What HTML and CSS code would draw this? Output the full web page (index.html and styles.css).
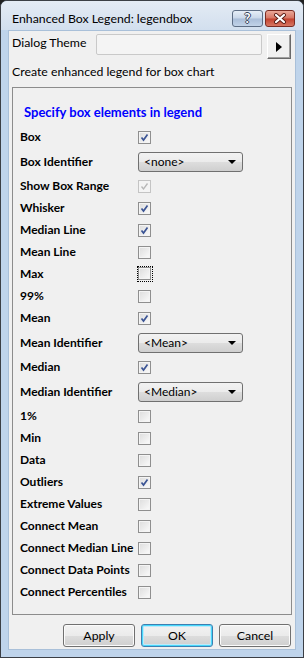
FILE: index.html
```html
<!DOCTYPE html>
<html lang="en">
<head>
  <meta charset="UTF-8" />
  <title>Enhanced Box Legend: legendbox</title>
  <link rel="stylesheet" href="styles.css">
</head>
<body>

<div class="window">
  <!-- TITLE BAR -->
  <div class="titlebar">
    <span class="title">Enhanced Box Legend: legendbox</span>
    <div class="caption-btns">
      <span class="cap help">?</span>
      <span class="cap close">
        <svg width="14" height="11" viewBox="0 0 14 11">
          <path d="M3 2 L11 9 M11 2 L3 9" stroke="#5a1e16" stroke-width="4" stroke-linecap="round"/>
          <path d="M3 2 L11 9 M11 2 L3 9" stroke="#fff" stroke-width="2.2" stroke-linecap="round"/>
        </svg>
      </span>
    </div>
  </div>

  <div class="frame">
    <div class="client">

      <div class="theme-row">
        <span class="theme-label">Dialog Theme</span>
        <span class="theme-field"></span>
        <span class="arrow-btn">
          <svg width="6" height="10" viewBox="0 0 6 10"><path d="M0 0 L6 5 L0 10 Z" fill="#000"/></svg>
        </span>
      </div>

      <div class="desc">Create enhanced legend for box chart</div>

      <!-- LEGEND ELEMENTS -->
      <div class="group">
        <div class="group-title">Specify box elements in legend</div>
        <div class="rows">
          <div class="row"><span class="lbl">Box</span><span class="chk on"><svg viewBox="0 0 11 11"><path d="M2.5 5.5 L4.5 8 L8.5 2.5" /></svg></span></div>
          <div class="row combo-row"><span class="lbl">Box Identifier</span><span class="combo"><span>&lt;none&gt;</span><i class="drop"></i></span></div>
          <div class="row"><span class="lbl">Show Box Range</span><span class="chk on disabled"><svg viewBox="0 0 11 11"><path d="M2.5 5.5 L4.5 8 L8.5 2.5" /></svg></span></div>
          <div class="row"><span class="lbl">Whisker</span><span class="chk on"><svg viewBox="0 0 11 11"><path d="M2.5 5.5 L4.5 8 L8.5 2.5" /></svg></span></div>
          <div class="row"><span class="lbl">Median Line</span><span class="chk on"><svg viewBox="0 0 11 11"><path d="M2.5 5.5 L4.5 8 L8.5 2.5" /></svg></span></div>
          <div class="row"><span class="lbl">Mean Line</span><span class="chk"></span></div>
          <div class="row"><span class="lbl">Max</span><span class="focus"><span class="chk"></span></span></div>
          <div class="row"><span class="lbl">99%</span><span class="chk"></span></div>
          <div class="row"><span class="lbl">Mean</span><span class="chk on"><svg viewBox="0 0 11 11"><path d="M2.5 5.5 L4.5 8 L8.5 2.5" /></svg></span></div>
          <div class="row combo-row"><span class="lbl">Mean Identifier</span><span class="combo"><span>&lt;Mean&gt;</span><i class="drop"></i></span></div>
          <div class="row"><span class="lbl">Median</span><span class="chk on"><svg viewBox="0 0 11 11"><path d="M2.5 5.5 L4.5 8 L8.5 2.5" /></svg></span></div>
          <div class="row combo-row"><span class="lbl">Median Identifier</span><span class="combo"><span>&lt;Median&gt;</span><i class="drop"></i></span></div>
          <div class="row"><span class="lbl">1%</span><span class="chk"></span></div>
          <div class="row"><span class="lbl">Min</span><span class="chk"></span></div>
          <div class="row"><span class="lbl">Data</span><span class="chk"></span></div>
          <div class="row"><span class="lbl">Outliers</span><span class="chk on"><svg viewBox="0 0 11 11"><path d="M2.5 5.5 L4.5 8 L8.5 2.5" /></svg></span></div>
          <div class="row"><span class="lbl">Extreme Values</span><span class="chk"></span></div>
          <div class="row"><span class="lbl">Connect Mean</span><span class="chk"></span></div>
          <div class="row"><span class="lbl">Connect Median Line</span><span class="chk"></span></div>
          <div class="row"><span class="lbl">Connect Data Points</span><span class="chk"></span></div>
          <div class="row"><span class="lbl">Connect Percentiles</span><span class="chk"></span></div>
        </div>
      </div>

      <div class="buttons">
        <span class="btn">Apply</span>
        <span class="btn default">OK</span>
        <span class="btn">Cancel</span>
      </div>

    </div>
  </div>
</div>

</body>
</html>
```

FILE: styles.css
```css
* { box-sizing: border-box; }
html, body {
  margin: 0; padding: 0;
  background: #202020;
}
body {
  font-family: Lato, 'Open Sans', sans-serif;
  font-size: 12px;
  color: #000;
}

.window {
  width: 304px; height: 658px;
  border: 1px solid #3b3f45;
  border-radius: 7px 7px 0 0;
  background: #bfd4eb;
  display: flex; flex-direction: column;
  overflow: hidden;
}

/* title bar */
.titlebar {
  height: 29px; flex: none;
  display: flex; align-items: flex-start;
  padding: 0 8px 0 11px;
  background: linear-gradient(#e4ebf4, #d2dfee);
}
.title { line-height: 16px; margin-top: 10px; font-size: 12.3px; }
.caption-btns { margin-left: auto; margin-top: 9px; display: flex; gap: 2px; }
.cap {
  height: 17px;
  border: 1px solid #5d6d84; border-radius: 3px;
  display: flex; align-items: center; justify-content: center;
}
.help {
  width: 31px;
  background: linear-gradient(#e6eef7, #c9d7e9 48%, #a9bdd8 52%, #c2d3e8);
  color: #fff; font-weight: bold; font-size: 13px; line-height: 13px;
  text-shadow: 1px 0 #36435a, -1px 0 #36435a, 0 1px #36435a, 0 -1px #36435a;
}
.close {
  width: 30px;
  border-color: #7b2c22;
  background: linear-gradient(#eaa898, #d67563 48%, #c2412d 52%, #d77762);
}

/* client area */
.frame { flex: 1; display: flex; padding: 0 7px 7px; }
.client {
  flex: 1;
  background: #f0f0f0;
  border: 1px solid #a9c0d9;
  padding: 3px 3px 0;
  display: flex; flex-direction: column;
}

.theme-row { display: flex; height: 25px; }
.theme-label { width: 84px; line-height: 16px; margin-top: 1px; font-size: 12.3px; }
.theme-field {
  width: 166px; height: 21px;
  border: 1px solid #c9c9c9; border-radius: 2px;
  background: #f4f4f4;
}
.arrow-btn {
  width: 24px; height: 25px; margin-left: 5px;
  background: #f0f0f0;
  border: 1px solid; border-color: #fff #696969 #696969 #fff;
  box-shadow: inset -1px -1px #a0a0a0;
  display: flex; align-items: center; justify-content: center;
}

.desc { margin-top: 5px; line-height: 16px; font-size: 12.3px; }

.group {
  margin-top: 7px;
  border: 1px solid #8c8c8c;
  padding: 16px 0 11px 7px;
}
.group-title { color: #0000ff; font-weight: bold; line-height: 16px; font-size: 13px; padding-left: 4px; }
.rows { margin-top: 6px; }
.row { display: flex; align-items: center; height: 22px; }
.combo-row { height: 27px; }
.lbl { width: 118px; font-weight: bold; white-space: nowrap; line-height: 16px; }

.chk {
  width: 13px; height: 13px;
  border: 1px solid #8f8f8f;
  background: linear-gradient(135deg, #dcdcdc, #fbfbfb);
  box-shadow: inset 0 0 0 1px #f4f4f4;
  display: flex;
}
.chk svg { width: 11px; height: 11px; }
.chk path { fill: none; stroke: #3b5494; stroke-width: 1.7; }
.chk.disabled { border-color: #c4c4c4; background: #f4f4f4; }
.chk.disabled path { stroke: #b7b7b7; stroke-width: 1.3; }
.focus { display: flex; border: 1px dotted #000; padding: 0 1px 1px 0; margin: -1px 0 0 -1px; }

.combo {
  width: 105px; height: 20px;
  border: 1px solid #707070; border-radius: 3px;
  background: linear-gradient(#f2f2f2, #ebebeb 50%, #dddddd 51%, #cfcfcf);
  display: flex; align-items: center;
  padding: 0 6px 0 5px;
}
.drop {
  margin-left: auto;
  width: 0; height: 0;
  border-left: 4px solid transparent; border-right: 4px solid transparent;
  border-top: 4px solid #000;
}

.buttons {
  margin-top: 9px;
  display: flex; justify-content: flex-end; gap: 6px;
  padding-right: 1px;
}
.btn {
  width: 72px; height: 23px;
  border: 1px solid #707070; border-radius: 3px;
  background: linear-gradient(#f2f2f2, #ebebeb 50%, #dddddd 51%, #cfcfcf);
  box-shadow: inset 0 0 0 1px #fbfbfb;
  display: flex; align-items: center; justify-content: center;
  font-size: 12.3px;
}
.btn.default {
  border-color: #3c7fb1;
  box-shadow: inset 0 0 0 1px #48d8fb, inset 0 0 0 2px #bde9fa;
}
```
